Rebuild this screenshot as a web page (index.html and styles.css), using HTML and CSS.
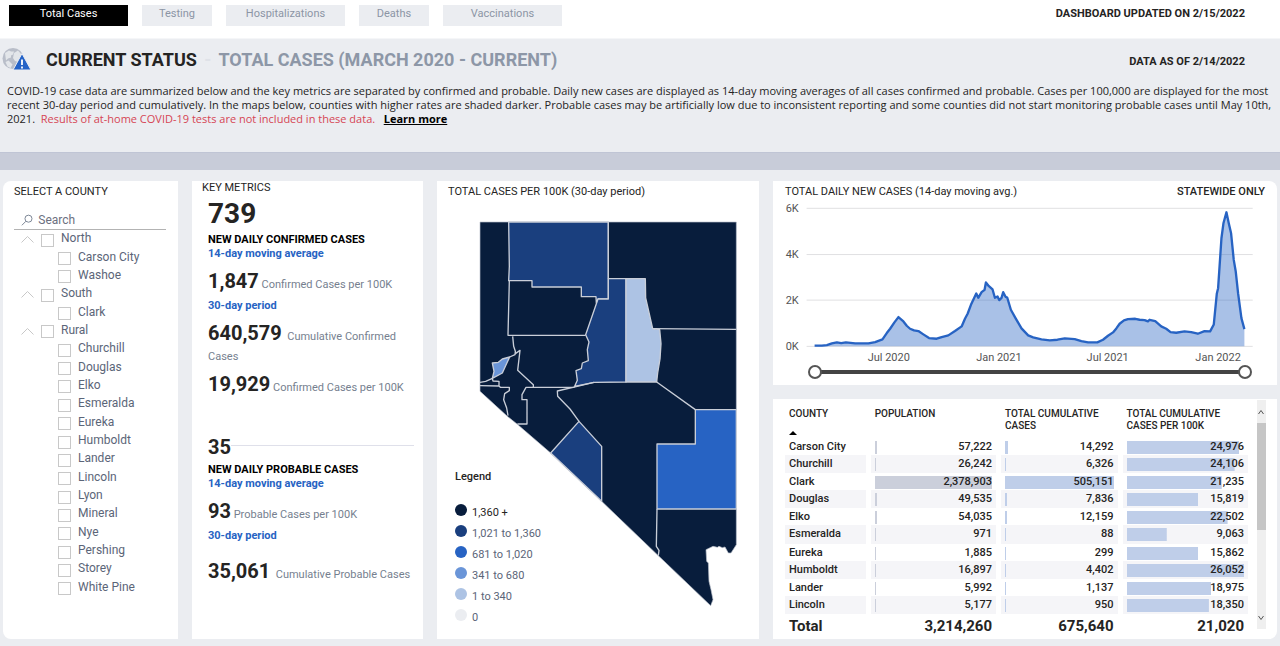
FILE: index.html
```html
<!DOCTYPE html>
<html lang="en">
<head>
<meta charset="utf-8">
<title>COVID-19 Total Cases</title>
<link rel="stylesheet" href="styles.css">
</head>
<body>
<header class="topbar">
  <nav class="tabs">
    <button class="tab active">Total Cases</button>
    <button class="tab short">Testing</button>
    <button class="tab">Hospitalizations</button>
    <button class="tab short">Deaths</button>
    <button class="tab">Vaccinations</button>
  </nav>
  <span class="stamp">DASHBOARD UPDATED ON 2/15/2022</span>
</header>

<section class="intro">
  <div class="title-row">
    <svg class="globe" viewBox="0 0 30 24" width="30" height="24" aria-hidden="true">
      <circle cx="11" cy="10.500" r="10.500" fill="#b9bec9"/>
      <path d="M3 5L7 2.500l2 1 3 0-1 3-2 1 0 2-3 1-2 2zM12 5l4-2.500 3 3.500 1 4-3 1-1 3-3-1-2-3zM3.500 14l3-1.500 2 2 2 2-2 3.500-3-1.500z" fill="#e3e6ea"/>
      <path d="M20 5.500L29 22H11z" fill="#2563c7" stroke="#eceef2" stroke-width="1"/>
      <path d="M20 11.500v5.500M20 18.500v2" stroke="#fff" stroke-width="1.800"/>
    </svg>
    <h1>CURRENT STATUS <span class="dash">-</span> <span class="sub">TOTAL CASES (MARCH 2020 - CURRENT)</span></h1>
    <span class="stamp">DATA AS OF 2/14/2022</span>
  </div>
  <p class="about">COVID-19 case data are summarized below and the key metrics are separated by confirmed and probable. Daily new cases are displayed as 14-day moving averages of all cases confirmed and probable. Cases per 100,000 are displayed for the most<br>recent 30-day period and cumulatively. In the maps below, counties with higher rates are shaded darker. Probable cases may be artificially low due to inconsistent reporting and some counties did not start monitoring probable cases until May 10th,<br>2021. &nbsp;<span class="warn">Results of at-home COVID-19 tests are not included in these data.</span> &nbsp; <a href="#">Learn more</a></p>
</section>

<main class="board">
  <section class="card counties">
    <h2>SELECT A COUNTY</h2>
    <label class="search">
      <svg viewBox="0 0 14 14" width="14" height="14" aria-hidden="true"><circle cx="8.500" cy="5.500" r="4" fill="none" stroke="#6c7789"/><path d="M5.500 8.500L1 13" stroke="#6c7789"/></svg>
      <input type="text" placeholder="Search" aria-label="Search">
    </label>
    <ul class="tree" id="tree"></ul>
  </section>

  <section class="card metrics">
    <h2>KEY METRICS</h2>
    <div class="group">
      <p class="big">739</p>
      <h3>NEW DAILY CONFIRMED CASES</h3>
      <p class="note">14-day moving average</p>
      <p class="line"><b>1,847</b> Confirmed Cases per 100K</p>
      <p class="note">30-day period</p>
      <p class="line"><b>640,579</b> &nbsp;Cumulative Confirmed Cases</p>
      <p class="line next"><b>19,929</b> Confirmed Cases per 100K</p>
    </div>
    <div class="group probable">
      <p class="mid"><span>35</span></p>
      <h3>NEW DAILY PROBABLE CASES</h3>
      <p class="note">14-day moving average</p>
      <p class="line"><b>93</b> Probable Cases per 100K</p>
      <p class="note">30-day period</p>
      <p class="line last"><b>35,061</b> &nbsp;Cumulative Probable Cases</p>
    </div>
  </section>

  <section class="card mapcard">
    <h2>TOTAL CASES PER 100K (30-day period)</h2>
    <svg class="map" viewBox="130 154 774 1158" role="img" aria-label="Nevada counties map">
      <path fill="#081d3c" stroke="#b9bfca" stroke-width="2" d="M133 157H902V1125L886 1150H878L868 1132 860 1134 850 1130 845 1133 832 1130 811 1140 813 1175 818 1180 820 1235 826 1260 832 1290 825 1308 668 1158 498 995 345 850 245 764 215 740 133 665z"/>
      <g stroke="#c9ced8" stroke-width="4" stroke-linejoin="round">
        <path fill="#1a3f7e" d="M219 157H518V388H487L482 400 481 381H437V352H289V333H219L221 290z"/>
        <path fill="#1a3f7e" d="M518 327H571V637L475 638 417 650 425 632 421 603 437 597 440 580 458 573 455 540 460 517 450 495 487 388H518z"/>
        <path fill="#adc3e4" d="M571 327H629L630 385 651 477 672 480 676 522 673 568 666 610 663 637H571z"/>
        <path fill="#6a95d8" d="M170 580L188 578 200 568 222 562 200 610 170 626 175 605z"/>
        <path fill="#1a3f7e" d="M430 755L498 830V995L345 850z"/>
        <path fill="#2763c3" d="M779 720H902V1018H664V823H779z"/>
        <g fill="none">
          <path d="M221 333L217 497H450M518 157V327M651 477L902 479M231 500L234 530 239 545 238 555 222 562M239 552L253 542 246 602 293 645V652M417 653H271L259 675V690H274V763H245M475 638L365 664 366 680 403 718 430 755M663 637L779 720M133 638L150 635 170 626 172 634 190 635V650M133 648L190 649 194 653H221V663L207 672 204 690 213 715 217 738M664 1018L662 1130 670 1142 668 1158"/>
        </g>
      </g>
    </svg>
    <div class="legend">
      <h3>Legend</h3>
      <ul>
        <li class="l1">1,360 +</li><li class="l2">1,021 to 1,360</li><li class="l3">681 to 1,020</li><li class="l4">341 to 680</li><li class="l5">1 to 340</li><li class="l6">0</li>
      </ul>
    </div>
  </section>

  <div class="right">
    <section class="card chart">
      <div class="chart-head"><h2>TOTAL DAILY NEW CASES (14-day moving avg.)</h2><span>STATEWIDE ONLY</span></div>
      <svg viewBox="0 87 1515 495" role="img" aria-label="Daily new cases chart">
        <g transform="translate(-23 0)">
          <g stroke="#e0e0e2" stroke-width="3"><path d="M124 115H1465M124 254H1465M124 391H1465M124 530H1465"/></g>
          <path fill="#2763c3" fill-opacity=".4" d="M150 528L185 526 215 518 300 521 330 517 352 509 375 477 388 458 400 442 415 455 435 477 460 484 492 505 515 507 550 497 590 470 608 432 618 405 634 371 640 384 650 367 659 360 663 338 672 349 683 359 690 384 698 380 703 391 710 384 715 367 722 381 727 383 738 420 752 445 770 476 790 497 830 509 855 512 900 506 930 508 970 518 998 518 1015 510 1045 488 1065 462 1090 448 1112 447 1140 451 1172 454 1190 470 1218 487 1235 489 1260 485 1300 492 1320 484 1337 485 1348 464 1357 372 1361 355 1371 205 1377 160 1386 127 1393 160 1400 190 1408 270 1414 305 1421 370 1431 445 1440 478V530H150z"/>
          <path fill="none" stroke="#2763c3" stroke-width="7" stroke-linejoin="round" d="M148 528L170 528 185 526 200 521 215 518 228 520 242 518 270 521 310 521 330 517 352 509 365 490 375 477 388 458 400 442 415 455 425 468 435 477 447 482 460 484 475 494 492 505 515 507 530 502 550 497 570 484 590 470 600 447 608 432 618 405 634 371 640 384 650 367 659 360 663 338 672 349 683 359 690 384 698 380 703 391 710 384 715 367 722 381 727 383 738 420 752 445 770 476 790 497 805 503 830 509 855 512 878 510 900 506 930 508 950 514 970 518 998 518 1015 510 1030 498 1045 488 1055 476 1065 462 1078 452 1090 448 1112 447 1125 450 1140 451 1150 455 1155 450 1172 454 1190 470 1205 477 1218 487 1235 489 1260 485 1280 487 1300 492 1320 484 1337 485 1348 464 1357 372 1361 355 1371 205 1377 160 1386 127 1393 160 1400 190 1408 270 1414 305 1421 370 1431 445 1440 478"/>
          <g class="axis">
            <text x="61" y="125">6K</text><text x="61" y="265">4K</text><text x="61" y="402">2K</text><text x="61" y="541">0K</text>
            <g text-anchor="middle"><text x="371" y="573">Jul 2020</text><text x="702" y="573">Jan 2021</text><text x="1029" y="573">Jul 2021</text><text x="1361" y="573">Jan 2022</text></g>
          </g>
        </g>
      </svg>
      <div class="range"><input type="range" min="0" max="100" value="0" aria-label="Start date"><input type="range" min="0" max="100" value="100" aria-label="End date"></div>
    </section>

    <section class="card tablecard">
      <table>
        <colgroup><col class="c1"><col class="c2"><col class="c3"><col class="c4"></colgroup>
        <thead><tr><th>COUNTY<span class="sort"></span></th><th>POPULATION</th><th>TOTAL CUMULATIVE<br>CASES</th><th>TOTAL CUMULATIVE<br>CASES PER 100K</th></tr></thead>
        <tbody id="rows"></tbody>
        <tfoot><tr><td>Total</td><td>3,214,260</td><td>675,640</td><td>21,020</td></tr></tfoot>
      </table>
      <div class="scroll">
        <button aria-label="Scroll up"><svg viewBox="0 0 8 8" width="8" height="8"><path d="M1.500 6L4 2.500 6.500 6" fill="none" stroke="#555"/></svg></button>
        <div class="thumb"></div>
        <button class="down" aria-label="Scroll down"><svg viewBox="0 0 8 8" width="8" height="8"><path d="M1.500 2L4 5.500 6.500 2" fill="none" stroke="#555"/></svg></button>
      </div>
    </section>
  </div>
</main>
<script src="app.js"></script>
</body>
</html>
```

FILE: styles.css
```css
* { box-sizing: border-box; }
body, h1, h2, h3, p, ul { margin: 0; padding: 0; }
ul { list-style: none; }
body {
  background: #ebedf1;
  font-family: Roboto, "Liberation Sans", sans-serif;
  font-size: 12px;
  color: #252423;
}
button, input { font: inherit; }
h2 { font-size: 11px; line-height: 14px; font-weight: 400; }

.topbar {
  display: flex;
  align-items: flex-start;
  justify-content: space-between;
  height: 39px;
  padding: 5px 35px 0 9px;
  background: #fff;
}
.tabs { display: flex; gap: 14px; }
.tab {
  width: 119px;
  height: 21px;
  padding: 0 0 4px;
  border: 0;
  background: #ebedf1;
  color: #8b95a5;
  font-size: 11px;
}
.tab.short { width: 70px; }
.tab.active { background: #000; color: #fff; }
.stamp { font-size: 11px; line-height: 18px; font-weight: 700; }

.intro {
  height: 131px;
  border-bottom: 17px solid #c8ccd9;
  box-shadow: inset 0 -1px #c0c5d5, 0 -1px #f5f6f8;
}
.title-row { display: flex; align-items: center; padding: 6px 35px 0 2px; height: 40px; }
.globe { margin: 0 14px 5px 0; }
h1 { flex: 1; margin-bottom: 5px; font-size: 18px; line-height: 28px; font-weight: 700; }
.dash { color: #dfe2e8; margin: 0 3px; }
.sub { color: #8d97a7; }
.about { padding: 5px 0 0 7px; font-family: "Open Sans", Roboto, sans-serif; font-size: 11px; line-height: 14px; white-space: nowrap; }
.warn { color: #d64554; }
.about a { color: #000; font-weight: 700; }

.board {
  display: grid;
  grid-template-columns: 175fr 231fr 322fr 504fr;
  gap: 14px;
  padding: 11px 3px 7px;
}
.card { background: #fff; min-width: 0; }

.counties { padding: 4px 12px 0 11px; border-radius: 8px 0 0 8px; }
.search {
  display: flex;
  align-items: center;
  gap: 5px;
  height: 20px;
  margin-top: 11px;
  padding-left: 7px;
  border-bottom: 1px solid #b3b3b3;
  color: #6c7789;
}
.search input { width: 100%; padding: 0; border: 0; outline: 0; background: none; }
.search input::placeholder { color: #6c7080; opacity: 1; }
.tree { display: grid; grid-auto-rows: 1fr; height: 367px; color: #5b6578; font-size: 12px; }
.tree li, .tree label { display: flex; align-items: center; }
.tree li { padding-left: 7px; }
.tree .child { padding-left: 44px; }
.tree svg { margin-right: 7px; }
.tree label { gap: 7px; line-height: 14px; }
.tree span { padding-bottom: 2px; }
.tree input {
  appearance: none;
  width: 13px;
  height: 13px;
  margin: 2px 0 0;
  border: 1px solid #c8c8c8;
  background: #fff;
}

.metrics { padding: 0 5px 0 10px; }
.group { padding-left: 6px; }
.big { font-size: 28px; line-height: 37px; font-weight: 700; }
.metrics h3 { font-size: 11px; line-height: 15px; font-weight: 700; color: #000; }
.note { color: #2763c3; font-size: 11px; line-height: 14px; font-weight: 700; }
.line { margin: 14px 0 4px; color: #767f8f; font-size: 11px; line-height: 20px; }
.line b { color: #252423; font-size: 20px; line-height: 0; }
.line.next { margin-top: 11px; }
.line.last { margin-top: 22px; }
.probable { margin-top: 37px; }
.mid { display: flex; align-items: center; margin-bottom: 3px; font-size: 20px; line-height: 24px; font-weight: 700; }
.mid::after { content: ""; flex: 1; height: 1px; margin: 0 4px 3px 0; background: #dfe0ea; }

.mapcard { position: relative; padding: 4px 22px 0 11px; }
.map { display: block; width: calc(100% - 31px); margin: 22px 0 0 31px; }
.legend { position: absolute; left: 18px; top: 289px; }
.legend h3 { font-size: 11px; line-height: 14px; font-weight: 500; margin-bottom: 18px; }
.legend li { display: flex; align-items: center; gap: 5px; height: 21px; font-size: 11px; color: #5b6578; }
.legend li::before { content: ""; width: 12px; height: 12px; margin-bottom: 5px; border-radius: 50%; background: var(--dot); }
.legend .l1 { --dot: #081d3c; color: #252423; }
.l2 { --dot: #1a3f7e; }
.l3 { --dot: #2763c3; }
.l4 { --dot: #6a95d8; }
.l5 { --dot: #adc3e4; }
.l6 { --dot: #ebedf1; }

.right { display: flex; flex-direction: column; gap: 14px; min-width: 0; }
.chart { height: 204px; border-radius: 0 8px 0 0; padding-top: 4px; }
.chart-head { display: flex; justify-content: space-between; padding: 0 12px; line-height: 14px; }
.chart-head span { font-size: 11px; font-weight: 500; }
.chart svg { display: block; width: 100%; }
.axis { font-size: 33px; fill: #555; }
.range { position: relative; height: 16px; margin: 0 25px 0 35px; }
.range::before { content: ""; position: absolute; left: 7px; right: 7px; top: 6px; height: 4px; background: #444; }
.range input { position: absolute; inset: 0; width: 100%; height: 16px; margin: 0; appearance: none; background: none; pointer-events: none; }
.range input::-webkit-slider-thumb {
  appearance: none;
  width: 14px;
  height: 14px;
  border: 2px solid #555;
  border-radius: 50%;
  background: #fff;
  pointer-events: auto;
}

.tablecard { display: flex; gap: 4px; height: 240px; padding: 1px 11px 0 7px; border-radius: 0 0 8px 0; }
table { flex: 1; table-layout: fixed; border-collapse: separate; border-spacing: 5px 0; height: 237px; font-size: 11px; }
.c1 { width: 18%; }
.c2 { width: 28%; }
.c3 { width: 26%; }
.c4 { width: 28%; }
th, td { padding: 0 4px; text-align: right; line-height: 12px; }
th { height: 38px; padding-top: 8px; font-size: 10px; text-align: left; vertical-align: top; font-weight: 500; white-space: nowrap; }
td:first-child { text-align: left; }
tbody td {
  height: 17px;
  padding-top: 3px;
  font-weight: 500;
  vertical-align: top;
  background-repeat: no-repeat;
  background-origin: content-box;
}
tbody tr:nth-child(even) td { height: 18px; background-color: #f5f5f8; }
.bar { background-image: linear-gradient(#bfcee9, #bfcee9); background-size: max(1px, var(--w)) 13px; }
.pop { background-image: linear-gradient(#cbcfdb, #cbcfdb); }
tfoot td { height: 23px; font-size: 15px; line-height: 20px; font-weight: 700; }
.sort { display: block; width: 0; margin-top: 11px; border: 4px solid transparent; border-top: 0; border-bottom-color: #000; }
.scroll { width: 9px; height: 229px; display: flex; flex-direction: column; background: #efefef; }
.scroll button { display: flex; padding: 0; border: 0; background: none; height: 23px; align-items: center; }
.scroll .down { margin-top: auto; }
.thumb { height: 107px; background: #c6c6c6; }
```

FILE: app.js
```js
const regions = {
  North: ["Carson City", "Washoe"],
  South: ["Clark"],
  Rural: ["Churchill", "Douglas", "Elko", "Esmeralda", "Eureka", "Humboldt", "Lander",
    "Lincoln", "Lyon", "Mineral", "Nye", "Pershing", "Storey", "White Pine"]
};
const chevron = '<svg viewBox="0 0 13 8" width="13" height="8" aria-hidden="true"><path d="M.500 7.500L6.500 1.500 12.500 7.500" fill="none" stroke="#c8c8c8"/></svg>';
const box = name => `<label><input type="checkbox"><span>${name}</span></label>`;
document.getElementById("tree").innerHTML = Object.entries(regions).map(([name, list]) =>
  `<li>${chevron}${box(name)}</li>` + list.map(c => `<li class="child">${box(c)}</li>`).join("")
).join("");

const data = [
  ["Carson City", 57222, 14292, 24976, 96],
  ["Churchill", 26242, 6326, 24106, 92],
  ["Clark", 2378903, 505151, 21235, 81],
  ["Douglas", 49535, 7836, 15819, 61],
  ["Elko", 54035, 12159, 22502, 86],
  ["Esmeralda", 971, 88, 9063, 34],
  ["Eureka", 1885, 299, 15862, 61],
  ["Humboldt", 16897, 4402, 26052, 100],
  ["Lander", 5992, 1137, 18975, 72],
  ["Lincoln", 5177, 950, 18350, 70]
];
const share = (value, max) => Math.round(value / max * 100) + "%";
document.getElementById("rows").innerHTML = data.map(([name, pop, cases, rate, rateShare]) =>
  `<tr><td>${name}</td>
   <td class="bar pop" style="--w:${share(pop, 2378903)}">${pop.toLocaleString("en-US")}</td>
   <td class="bar" style="--w:${share(cases, 505151)}">${cases.toLocaleString("en-US")}</td>
   <td class="bar" style="--w:${rateShare}%">${rate.toLocaleString("en-US")}</td></tr>`).join("");
```
